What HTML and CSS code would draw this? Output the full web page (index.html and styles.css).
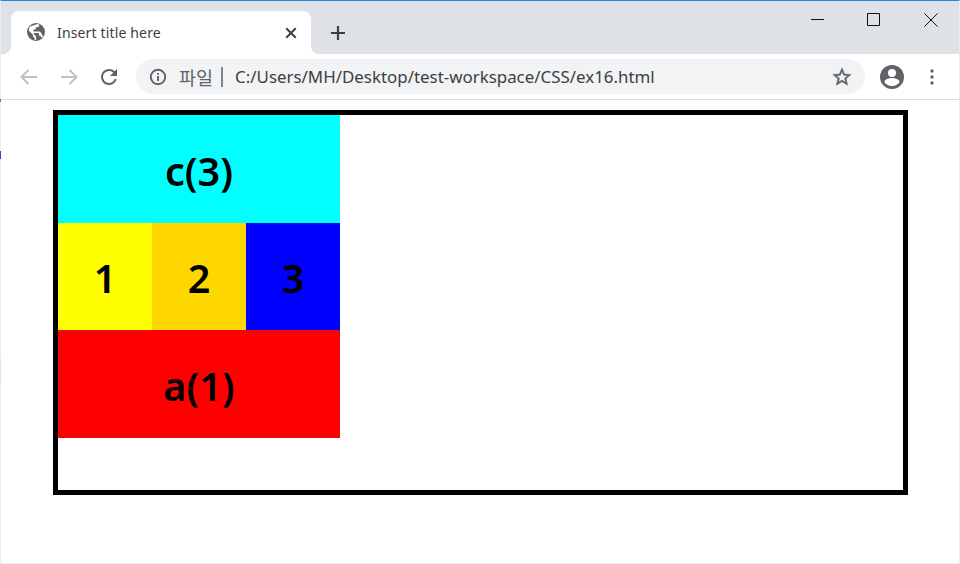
FILE: index.html
```html
<!DOCTYPE html>
<html lang="ko">
<head>
<meta charset="utf-8">
<title>Insert title here</title>
<link rel="stylesheet" href="styles.css">
</head>
<body>
<div class="window">
  <i class="edge edge-a"></i><i class="edge edge-b"></i><i class="edge edge-c"></i>
  <header class="tabstrip">
    <div class="tab">
      <svg class="favicon" viewBox="0 0 18 18"><circle cx="9" cy="9" r="9"/><path class="land" d="M1.6 7.5l4.4 4.2v1.3c0 .9.7 1.5 1.5 1.5v2.2l1.6.2v-3.7l-2.2-1.7v-1.4h5v2.6h1.4l1.5 2.1 1.2-1.4-1.8-3.4-1.6-1.5H6.5V6.4h2.2V4.2h2.4l1.4-2.5-1.8-.7L2.8 3.5z"/></svg>
      <span class="tab-title">Insert title here</span>
      <svg class="tab-close" viewBox="0 0 12 12"><path d="M1.2 1.2l9.6 9.6M10.8 1.2l-9.6 9.6"/></svg>
    </div>
    <svg class="new-tab" viewBox="0 0 16 16"><path d="M8 1v14M1 8h14"/></svg>
    <div class="win-controls">
      <svg class="win-btn" viewBox="0 0 14 14"><path d="M1 6.5h13"/></svg>
      <svg class="win-btn" viewBox="0 0 14 14"><path d="M.5.5h12v12h-12z"/></svg>
      <svg class="win-btn" viewBox="0 0 14 14"><path d="M.5.5l13 13M13.5.5l-13 13"/></svg>
    </div>
  </header>
  <nav class="toolbar">
    <svg class="nav-icon" viewBox="0 0 24 24"><path class="muted" d="M20 12H5M11.5 5l-7 7 7 7"/></svg>
    <svg class="nav-icon" viewBox="0 0 24 24"><path class="muted" d="M4 12h15M12.5 5l7 7-7 7"/></svg>
    <svg class="nav-icon" viewBox="0 0 24 24"><path class="fill" d="M17.65 6.35A7.96 7.96 0 0 0 12 4a8 8 0 1 0 7.73 10h-2.08A6 6 0 1 1 12 6c1.66 0 3.14.69 4.22 1.78L13 11h7V4l-2.35 2.35z"/></svg>
    <div class="omnibox">
      <svg class="info" viewBox="0 0 18 18"><circle cx="9" cy="9" r="7.2"/><path d="M9 8v5M9 5v1.8"/></svg>
      <span class="scheme">파일</span>
      <span class="sep"></span>
      <span class="url">C:/Users/MH/Desktop/test-workspace/CSS/ex16.html</span>
      <svg class="star" viewBox="0 0 24 24"><path d="M22 9.24l-7.19-.62L12 2 9.19 8.63 2 9.24l5.46 4.73L5.82 21 12 17.27 18.18 21l-1.63-7.03L22 9.24zM12 15.4l-3.76 2.27 1-4.28-3.32-2.88 4.38-.38L12 6.1l1.71 4.04 4.38.38-3.32 2.88 1 4.28L12 15.4z"/></svg>
    </div>
    <svg class="avatar" viewBox="0 0 24 24"><path d="M12 0a12 12 0 1 0 0 24 12 12 0 0 0 0-24zm0 4a4 4 0 1 1 0 8 4 4 0 0 1 0-8zm0 17c-3.2 0-6-1.6-7.6-4.1 0-2.6 5-4 7.6-4s7.6 1.4 7.6 4A9 9 0 0 1 12 21z"/></svg>
    <svg class="menu" viewBox="0 0 4 16"><circle cx="2" cy="2" r="1.7"/><circle cx="2" cy="8" r="1.7"/><circle cx="2" cy="14" r="1.7"/></svg>
  </nav>
  <main class="page">
    <div class="outer">
      <div class="stack">
        <div class="cell wide cyan">c(3)</div>
        <div class="cell yellow">1</div>
        <div class="cell gold">2</div>
        <div class="cell blue">3</div>
        <div class="cell wide red">a(1)</div>
      </div>
    </div>
  </main>
</div>
</body>
</html>
```
FILE: styles.css
```css
* { box-sizing: border-box; }
html, body { margin: 0; padding: 0; background: #fff; }
.window {
  position: relative;
  width: 960px;
  height: 564px;
  display: flex;
  flex-direction: column;
  border: 1px solid #ececec;
  border-top: 1px solid #1a8ae5;
  font-family: "Noto Sans", "Noto Sans CJK KR", sans-serif;
}
.edge { position: absolute; left: -1px; width: 1px; }
.edge-a { top: 98px; height: 3px; background: #7b5cf0; }
.edge-b { top: 150px; height: 8px; background: #5a30e8; }
.edge-c { top: 356px; height: 28px; background: #d6e4f5; }
.tabstrip {
  height: 53px;
  flex: none;
  display: flex;
  align-items: flex-end;
  background: #dee1e6;
  padding-left: 10px;
}
.tab {
  position: relative;
  width: 300px;
  height: 43px;
  display: flex;
  align-items: center;
  background: #fff;
  border-radius: 8px 8px 0 0;
  padding: 0 12px 0 16px;
}
.tab::before, .tab::after {
  content: "";
  position: absolute;
  bottom: 0;
  width: 8px;
  height: 8px;
  background: radial-gradient(circle at 0 0, #dee1e6 7.6px, #fff 8.4px);
}
.tab::before { left: -8px; }
.tab::after { right: -8px; transform: scaleX(-1); }
.favicon { width: 18px; height: 18px; fill: #5f6368; margin-top: -1px; flex: none; }
.favicon .land { fill: #fff; }
.tab-title {
  font-family: "Noto Sans", sans-serif;
  font-size: 14px;
  letter-spacing: .15px;
  color: #3c4043;
  margin-left: 12px;
  flex: 1;
}
.tab-close { width: 12px; height: 12px; fill: none; stroke: #3c4043; stroke-width: 2; flex: none; margin-right: 2px; }
.new-tab { width: 16px; height: 16px; fill: none; stroke: #3c4043; stroke-width: 2.2; margin: 0 0 13px 19px; flex: none; }
.win-controls {
  margin-left: auto;
  align-self: flex-start;
  display: flex;
  gap: 43px;
  padding: 12px 21px 0 0;
}
.win-btn { width: 14px; height: 14px; fill: none; stroke: #111; stroke-width: 1; flex: none; }
.toolbar {
  height: 46px;
  flex: none;
  display: flex;
  align-items: center;
  background: #fff;
  border-bottom: 1px solid #dadce0;
  padding: 0 16px;
}
.nav-icon { width: 24px; height: 24px; margin-right: 16px; flex: none; }
.nav-icon .muted { fill: none; stroke: #bdc1c6; stroke-width: 2; }
.nav-icon .fill { fill: #5f6368; }
.omnibox {
  width: 729px;
  height: 35px;
  margin-left: -1px;
  display: flex;
  align-items: center;
  background: #f1f3f4;
  border-radius: 18px;
  padding: 0 13px;
}
.info { width: 18px; height: 18px; fill: none; stroke: #5f6368; stroke-width: 1.9; flex: none; }
.scheme { font-size: 18.5px; color: #5f6368; margin-left: 12px; white-space: nowrap; }
.sep { width: 1.5px; height: 20px; background: #80868b; margin-left: 8px; flex: none; }
.url {
  font-size: 16.9px;
  color: #3c4043;
  margin-left: 12.5px;
  flex: 1;
  white-space: nowrap;
}
.star { width: 22px; height: 22px; fill: #5f6368; stroke: #5f6368; stroke-width: .5; flex: none; margin-right: -1px; }
.avatar { width: 24px; height: 24px; fill: #5f6368; margin-left: 15px; flex: none; }
.menu { width: 4px; height: 16px; fill: #5f6368; margin-left: 26px; flex: none; }
.page {
  flex: 1;
  background: #fff;
  padding: 10px 0 0 52px;
}
.outer {
  width: 855px;
  height: 385px;
  border: 5px solid #000;
}
.stack {
  width: 282px;
  display: grid;
  grid-template-columns: repeat(3, 94px);
  grid-template-rows: 108px 107px 108px;
}
.cell {
  display: flex;
  align-items: center;
  justify-content: center;
  padding-top: 3px;
  font-size: 39.5px;
  font-weight: 600;
  color: #000;
}
.wide { grid-column: 1 / -1; }
.cyan { background: #0ff; }
.yellow { background: #ff0; }
.gold { background: #ffd700; }
.blue { background: #00f; }
.red { background: #f00; }
```
